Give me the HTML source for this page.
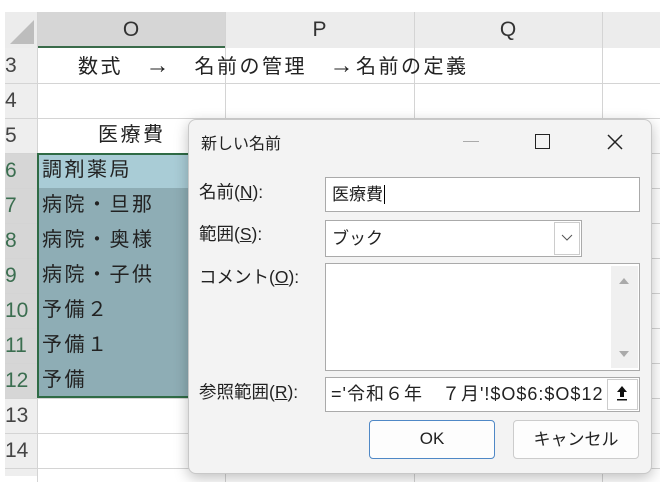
<!DOCTYPE html><html><head><meta charset="utf-8"><style>
body{margin:0;width:660px;height:482px;background:#fff;position:relative;overflow:hidden;font-family:"Liberation Sans","Noto Sans CJK JP",sans-serif;}
.a{position:absolute;box-sizing:border-box}
.hl{position:absolute;background:#d4d4d4;height:1px}
.vl{position:absolute;background:#d4d4d4;width:1px}
.rn{position:absolute;left:0;width:37px;height:35px;font-size:21px;color:#444;text-align:left;padding-left:5px;line-height:35px;box-sizing:border-box}
.cell{position:absolute;left:42px;font-size:20px;letter-spacing:2.5px;color:#222;line-height:35px}
.lbl{position:absolute;left:199px;font-size:17.5px;color:#222}
</style></head><body>
<div class="a" style="left:5px;top:12px;width:655px;height:36px;background:#ececec"></div>
<div class="a" style="left:37px;top:12px;width:188px;height:36px;background:#d6d6d6;border-bottom:2px solid #3a6b4a"></div>
<div class="a" style="left:5px;top:48px;width:32px;height:428px;background:#eeeeee"></div>
<div class="a" style="left:5px;top:153px;width:32px;height:245px;background:#d6d6d6"></div>
<svg class="a" style="left:8px;top:18px" width="28" height="28"><polygon points="26,2 26,26 2,26" fill="#bdbdbd"/></svg>
<div class="a" style="left:37px;top:12px;width:188px;line-height:36px;text-align:center;font-size:21px;color:#333">O</div>
<div class="a" style="left:225px;top:12px;width:189px;line-height:36px;text-align:center;font-size:21px;color:#333">P</div>
<div class="a" style="left:414px;top:12px;width:188px;line-height:36px;text-align:center;font-size:21px;color:#333">Q</div>
<div class="vl" style="left:225px;top:12px;height:470px"></div>
<div class="vl" style="left:414px;top:12px;height:470px"></div>
<div class="vl" style="left:602px;top:12px;height:470px"></div>
<div class="vl" style="left:37px;top:12px;height:470px"></div>
<div class="hl" style="left:5px;top:83px;width:655px"></div>
<div class="hl" style="left:5px;top:118px;width:655px"></div>
<div class="hl" style="left:5px;top:153px;width:655px"></div>
<div class="hl" style="left:5px;top:188px;width:655px"></div>
<div class="hl" style="left:5px;top:223px;width:655px"></div>
<div class="hl" style="left:5px;top:258px;width:655px"></div>
<div class="hl" style="left:5px;top:293px;width:655px"></div>
<div class="hl" style="left:5px;top:328px;width:655px"></div>
<div class="hl" style="left:5px;top:363px;width:655px"></div>
<div class="hl" style="left:5px;top:398px;width:655px"></div>
<div class="hl" style="left:5px;top:433px;width:655px"></div>
<div class="hl" style="left:5px;top:468px;width:655px"></div>
<div class="rn" style="top:48px">3</div><div class="rn" style="top:83px">4</div><div class="rn" style="top:118px">5</div>
<div class="rn" style="top:153px;color:#3b6e50">6</div><div class="rn" style="top:188px;color:#3b6e50">7</div><div class="rn" style="top:223px;color:#3b6e50">8</div><div class="rn" style="top:258px;color:#3b6e50">9</div><div class="rn" style="top:293px;color:#3b6e50">10</div><div class="rn" style="top:328px;color:#3b6e50">11</div><div class="rn" style="top:363px;color:#3b6e50">12</div>
<div class="rn" style="top:398px">13</div><div class="rn" style="top:433px">14</div>
<div class="a" style="left:78px;top:48px;line-height:35px;font-size:20px;letter-spacing:2.5px;color:#222;white-space:pre">数式　<span style="font-size:24px">→</span>　名前の管理　<span style="font-size:24px">→</span>名前の定義</div>
<div class="a" style="left:98px;top:118px;line-height:35px;font-size:20px;letter-spacing:2.5px;color:#222">医療費</div>
<div class="a" style="left:37px;top:153px;width:160px;height:245px;background:#8eadb5;border:2px solid #2f6b45"></div>
<div class="a" style="left:39px;top:155px;width:158px;height:33px;background:#a9ccd6"></div>
<div class="cell" style="top:153px">調剤薬局</div>
<div class="cell" style="top:188px">病院・旦那</div>
<div class="cell" style="top:223px">病院・奥様</div>
<div class="cell" style="top:258px">病院・子供</div>
<div class="cell" style="top:293px">予備２</div>
<div class="cell" style="top:328px">予備１</div>
<div class="cell" style="top:363px">予備</div>
<!-- dialog -->
<div class="a" style="left:188px;top:119px;width:464px;height:355px;background:#f3f3f3;border:1px solid #c8c8c8;border-radius:8px;box-shadow:0 4px 14px rgba(0,0,0,.25)"></div>
<div class="a" style="left:201px;top:130px;font-size:16px;color:#222">新しい名前</div>
<div class="a" style="left:463px;top:141px;width:16px;height:1px;background:#aaa"></div>
<div class="a" style="left:535px;top:134px;width:15px;height:15px;border:1.5px solid #222"></div>
<svg class="a" style="left:606px;top:133px" width="18" height="18"><path d="M2 2L16 16M16 2L2 16" stroke="#222" stroke-width="1.5"/></svg>
<div class="lbl" style="top:179px">名前(<u>N</u>):</div>
<div class="lbl" style="top:221px">範囲(<u>S</u>):</div>
<div class="lbl" style="top:264px">コメント(<u>O</u>):</div>
<div class="lbl" style="top:379px">参照範囲(<u>R</u>):</div>
<div class="a" style="left:325px;top:177px;width:315px;height:35px;background:#fff;border:1px solid #aaa;padding-left:6px;line-height:33px;font-size:17px;color:#222">医療費<span style="border-left:1px solid #000;margin-left:1px"></span></div>
<div class="a" style="left:325px;top:220px;width:257px;height:37px;background:#fff;border:1px solid #aaa;padding-left:6px;line-height:35px;font-size:17px;color:#222">ブック</div>
<div class="a" style="left:554px;top:222px;width:26px;height:33px;border:1px solid #ccc;background:#fff"></div>
<svg class="a" style="left:561px;top:234px" width="12" height="8"><path d="M1 1L6 6L11 1" stroke="#555" fill="none"/></svg>
<div class="a" style="left:325px;top:263px;width:315px;height:108px;background:#fff;border:1px solid #aaa"></div>
<div class="a" style="left:611px;top:266px;width:27px;height:102px;background:#f0f0f0"></div>
<svg class="a" style="left:618px;top:277px" width="12" height="8"><path d="M1 7L6 1L11 7Z" fill="#aaa"/></svg>
<svg class="a" style="left:618px;top:350px" width="12" height="8"><path d="M1 1L6 7L11 1Z" fill="#aaa"/></svg>
<div class="a" style="left:325px;top:377px;width:315px;height:35px;background:#fff;border:1px solid #aaa;padding-left:5px;line-height:33px;font-size:18px;letter-spacing:1px;color:#222;white-space:pre;overflow:hidden">='令和６年　７月'!$O$6:$O$12</div>
<div class="a" style="left:607px;top:379px;width:31px;height:31px;background:#fff;border:1px solid #ccc"></div>
<svg class="a" style="left:614px;top:384px" width="16" height="20"><path d="M8 2L3 8H6V13H10V8H13Z" fill="#111"/><rect x="3" y="15" width="10" height="1.5" fill="#111"/></svg>
<div class="a" style="left:369px;top:420px;width:126px;height:39px;background:#fdfdfd;border:1.5px solid #4f88c6;border-radius:4px;text-align:center;line-height:36px;font-size:17px;color:#222">OK</div>
<div class="a" style="left:513px;top:420px;width:126px;height:39px;background:#fdfdfd;border:1px solid #ccc;border-radius:4px;text-align:center;line-height:37px;font-size:17px;color:#222">キャンセル</div>
</body></html>
